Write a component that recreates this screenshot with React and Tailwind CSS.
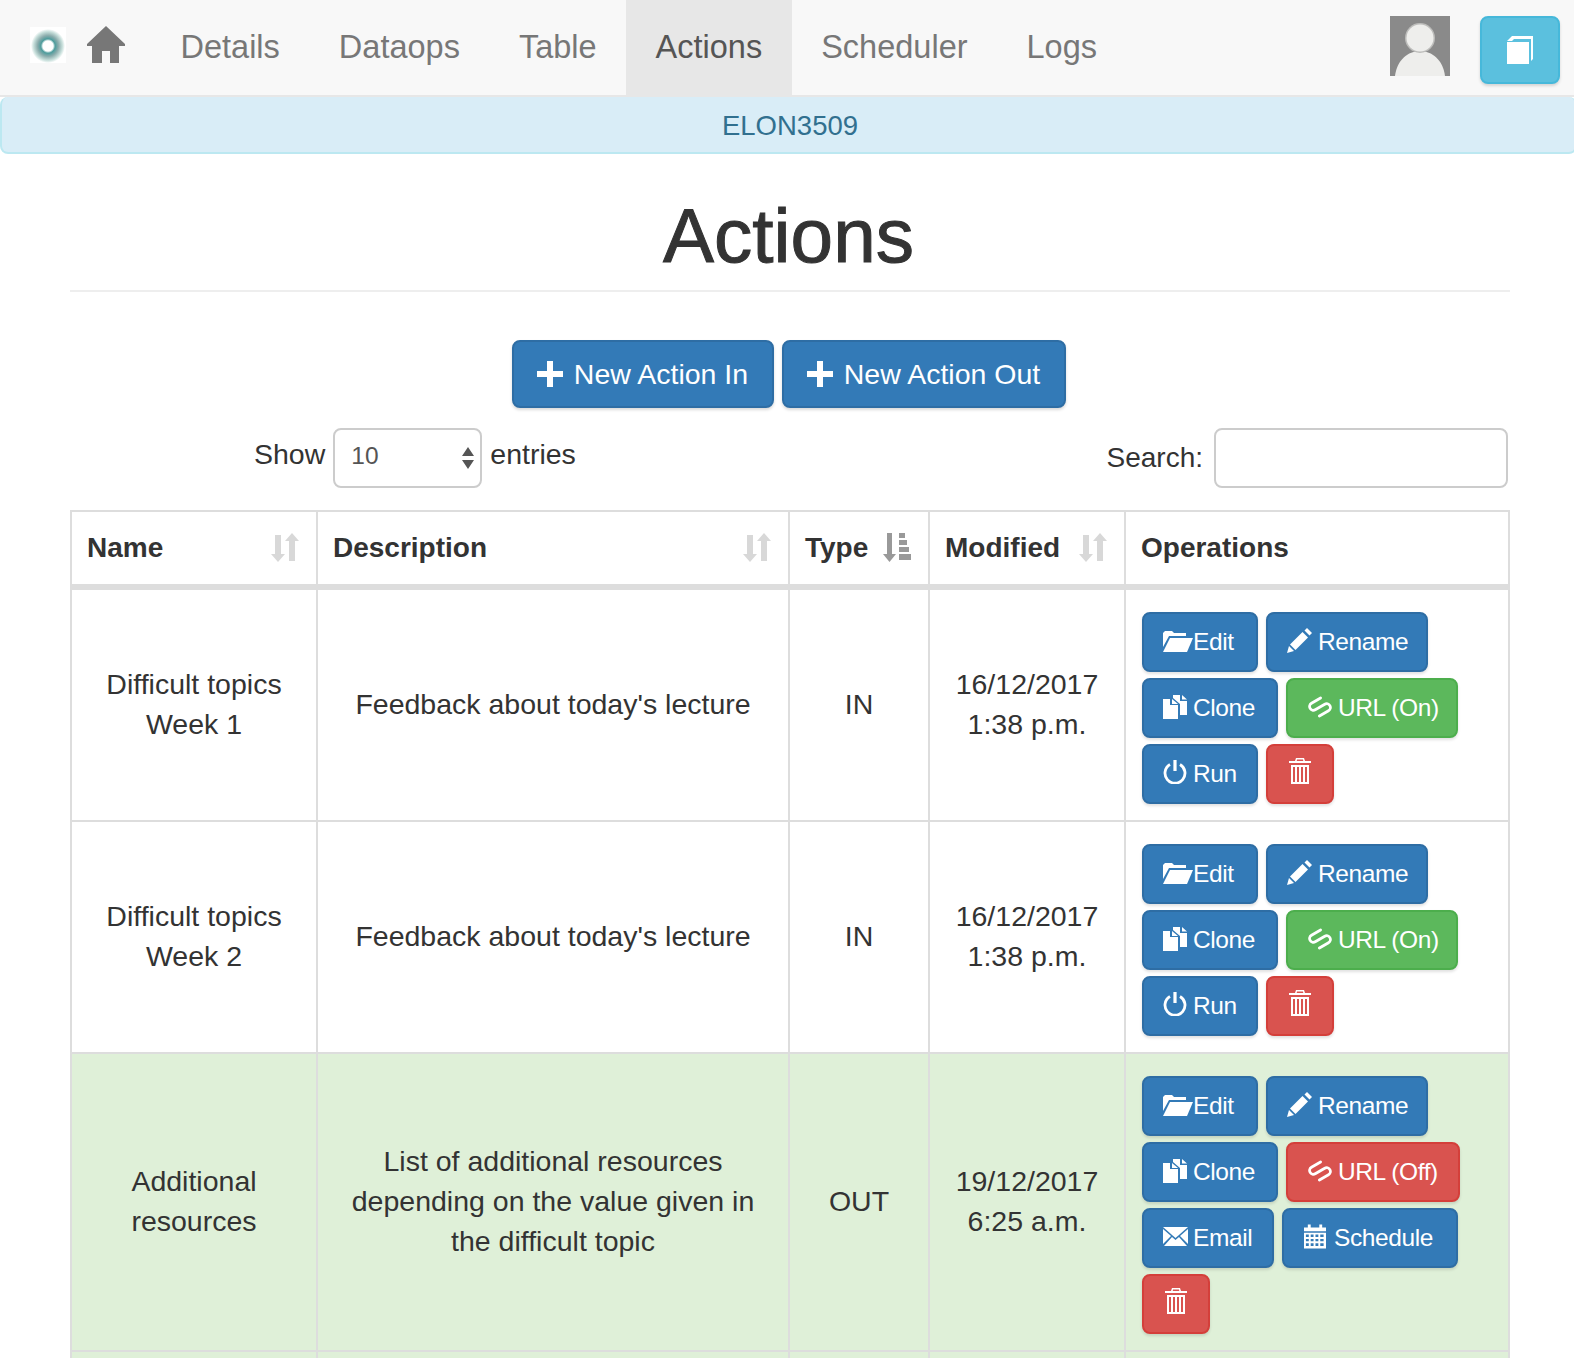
import React from "react";

const HomeIcon = () => (
  <svg className="w-[38px] h-[37px]" viewBox="0 0 38 37" fill="#777">
    <path d="M19 0 L38 18 V20 H32 V37 H23 V25 H15 V37 H5 V20 H0 V18 Z" />
  </svg>
);

const Logo = () => (
  <svg className="w-[36px] h-[36px]" viewBox="0 0 36 36">
    <defs>
      <radialGradient id="logoRing">
        <stop offset="0.3" stopColor="#ffffff" />
        <stop offset="0.42" stopColor="#4d9c9c" />
        <stop offset="0.62" stopColor="#8cadad" />
        <stop offset="0.85" stopColor="#c9e0dc" />
        <stop offset="1" stopColor="#ffffff" />
      </radialGradient>
    </defs>
    <rect width="36" height="36" fill="#fff" />
    <circle cx="18" cy="19" r="17" fill="url(#logoRing)" />
  </svg>
);

const Avatar = () => (
  <svg className="w-[60px] h-[60px]" viewBox="0 0 60 60">
    <rect width="60" height="60" fill="#8a8a8a" />
    <path d="M5 60 C7 44 18 35 30 35 C42 35 53 44 55 60 Z" fill="#eeeeec" />
    <circle cx="30" cy="22" r="15" fill="#bdbdbb" />
    <circle cx="30" cy="22" r="13.5" fill="#eeeeec" />
  </svg>
);

const BookIcon = () => (
  <svg className="w-[27px] h-[28px]" viewBox="0 0 27 28" fill="#fff">
    <path d="M0 5 L5 0 H26 V23 L24 25 V3 H7 L5 5 Z" />
    <path d="M0 6 H22 V28 H0 Z" />
  </svg>
);

const PlusIcon = () => (
  <svg className="w-[26px] h-[26px]" viewBox="0 0 26 26" fill="#fff">
    <path d="M10 0 H16 V10 H26 V16 H16 V26 H10 V16 H0 V10 H10 Z" />
  </svg>
);

const FolderIcon = () => (
  <svg className="w-[30px] h-[22px]" viewBox="0 0 30 22" fill="#fff">
    <path d="M0 17 V3 L2 1 H9 L11 3 H23 V6 H6 Z" />
    <path d="M7 8 H30 L24 22 H0 Z" />
  </svg>
);

const PencilIcon = () => (
  <svg className="w-[25px] h-[25px]" viewBox="0 0 25 25" fill="#fff">
    <path d="M0 25 L2 18 L7 23 Z" />
    <path d="M3 16.5 L15.5 4 L21 9.5 L8.5 22 Z" />
    <path d="M17.5 2.5 L20 0 L25 5 L22.5 7.5 Z" />
  </svg>
);

const CloneIcon = () => (
  <svg className="w-[24px] h-[24px]" viewBox="0 0 24 24" fill="#fff">
    <path d="M0 4 H7 V10 H15 V24 H0 Z" />
    <path d="M9 4 L15 9 H9 Z" />
    <path d="M10 0 H17 V6 H24 V20 H17 V9 L10 3 Z" />
    <path d="M19 0 L24 4.5 H19 Z" />
  </svg>
);

const LinkIcon = () => (
  <svg className="w-[24px] h-[24px]" viewBox="0 0 24 24" fill="none" stroke="#fff" strokeWidth="2.8" strokeLinecap="round">
    <g transform="translate(12 12) rotate(-30)">
      <path d="M-5 7.5 H5.5 A3.75 3.75 0 0 0 5.5 0 H-5.5 A3.75 3.75 0 0 1 -5.5 -7.5 H5" />
    </g>
  </svg>
);

const PowerIcon = () => (
  <svg className="w-[24px] h-[24px] mb-[2px]" viewBox="0 0 24 24" fill="none" stroke="#fff" strokeWidth="2.8">
    <path d="M7 4.5 A10 10 0 1 0 17 4.5" />
    <path d="M12 0 V11" strokeWidth="3.2" />
  </svg>
);

const TrashIcon = () => (
  <svg className="w-[22px] h-[26px] mb-[3px]" viewBox="0 0 22 26" fill="#fff">
    <path fillRule="evenodd" d="M7 0 H15 L16 3 H22 V5 H0 V3 H6 Z M8 1.5 L7.7 3 H14.3 L14 1.5 Z" />
    <path fillRule="evenodd" d="M2 7 H20 V26 H2 Z M4 9 V24 H6 V9 Z M8 9 V24 H10 V9 Z M12 9 V24 H14 V9 Z M16 9 V24 H18 V9 Z" />
  </svg>
);

const MailIcon = () => (
  <svg className="w-[25px] h-[20px]" viewBox="0 0 25 20" fill="#fff">
    <path d="M0 0 H25 L12.5 11 Z" />
    <path d="M0 2 L8 9 L0 17 Z" />
    <path d="M25 2 L17 9 L25 17 Z" />
    <path d="M9 10 L12.5 13 L16 10 L24 19 H1 Z" />
  </svg>
);

const CalendarIcon = () => (
  <svg className="w-[22px] h-[25px]" viewBox="0 0 23 25" fill="#fff">
    <path d="M4 0 H7 V3 H16 V0 H19 V3 H23 V7 H0 V3 H4 Z" />
    <path
      fillRule="evenodd"
      d="M0 8.5 H23 V25 H0 Z M2 10.5 V13 H5 V10.5 Z M7 10.5 V13 H10 V10.5 Z M12 10.5 V13 H15 V10.5 Z M17 10.5 V13 H20.5 V10.5 Z M2 15 V17.5 H5 V15 Z M7 15 V17.5 H10 V15 Z M12 15 V17.5 H15 V15 Z M17 15 V17.5 H20.5 V15 Z M2 19.5 V22.5 H5 V19.5 Z M7 19.5 V22.5 H10 V19.5 Z M12 19.5 V22.5 H15 V19.5 Z M17 19.5 V22.5 H20.5 V19.5 Z"
    />
  </svg>
);

const SortIcon = () => (
  <svg className="w-[28px] h-[30px]" viewBox="0 0 28 30" fill="#d8d8d8">
    <path d="M4 2 H10 V21 H14 L7 29 L0 21 H4 Z" />
    <path d="M21 0 L28 8 H24 V28 H18 V8 H14 Z" />
  </svg>
);

const SortActiveIcon = () => (
  <svg className="w-[28px] h-[30px]" viewBox="0 0 28 30" fill="#999">
    <path d="M4 0 H9 V21 H13 L6.5 29 L0 21 H4 Z" />
    <path d="M16 0 H22 V5 H16 Z M16 7 H24 V12 H16 Z M16 14 H26 V19 H16 Z M16 21 H28 V27 H16 Z" />
  </svg>
);

const navItems = ["Details", "Dataops", "Table", "Actions", "Scheduler", "Logs"];

const BLUE = "bg-[#337ab7] border-[#2e6da4]";
const GREEN = "bg-[#5cb85c] border-[#4cae4c]";
const RED = "bg-[#d9534f] border-[#d43f3a]";

const rows = [
  {
    name: ["Difficult topics", "Week 1"],
    desc: ["Feedback about today's lecture"],
    type: "IN",
    date: ["16/12/2017", "1:38 p.m."],
    urlOn: true,
  },
  {
    name: ["Difficult topics", "Week 2"],
    desc: ["Feedback about today's lecture"],
    type: "IN",
    date: ["16/12/2017", "1:38 p.m."],
    urlOn: true,
  },
  {
    name: ["Additional", "resources"],
    desc: ["List of additional resources", "depending on the value given in", "the difficult topic"],
    type: "OUT",
    date: ["19/12/2017", "6:25 a.m."],
    urlOn: false,
    green: true,
  },
];

// left aligned like the glyphicon + label of the original buttons
const OpButton = ({ color, icon, label, width, space = "pl-[19px] gap-[6px]" }) => (
  <button className={`${color} ${width} ${space} h-[60px] border-2 rounded-lg flex items-center justify-start text-white text-[24.5px] tracking-[-0.4px] shadow-[0_2px_3px_rgba(0,0,0,0.12)]`}>
    <span className="flex mb-[3px]">{icon}</span>
    {label && <span>{label}</span>}
  </button>
);

const Lines = ({ items }) => (
  <>
    {items.map((line) => (
      <div key={line}>{line}</div>
    ))}
  </>
);

const App = () => {
  return (
    <div className="h-[1358px] overflow-hidden bg-white text-[#333] text-[28.5px] leading-[40px] font-['Liberation_Sans',Arial,sans-serif]">
      {/* navbar */}
      <nav className="h-[97px] bg-[#f8f8f8] border-b-2 border-[#e7e7e7] flex items-start">
        <div className="flex items-center ml-[30px] mt-[26px] gap-[21px] mr-[26px]">
          <Logo />
          <HomeIcon />
        </div>
        <ul className="flex">
          {navItems.map((item) => (
            <li
              key={item}
              className={`h-[95px] px-[29.5px] flex items-center text-[32.5px] pb-[1px] ${item === "Actions" ? "bg-[#e7e7e7] text-[#555]" : "text-[#777]"}`}
            >
              {item}
            </li>
          ))}
        </ul>
        <div className="ml-auto flex items-start mt-[16px] mr-[14px] gap-[30px]">
          <Avatar />
          <button className="w-[80px] h-[68px] bg-[#5bc0de] border-2 border-[#46b8da] rounded-lg flex items-center justify-center shadow-[0_2px_3px_rgba(0,0,0,0.15)]">
            <BookIcon />
          </button>
        </div>
      </nav>

      {/* alert */}
      <div className="h-[57px] -mr-[3px] pl-[3px] bg-[#d9edf7] border-2 border-t-0 border-[#bce8f1] rounded-lg text-[#31708f] text-[27.5px] text-center leading-[57px]">
        ELON3509
      </div>

      <main className="pl-[70px] pr-[64px]">
        <h1 className="text-center text-[76.5px] leading-[80px] mt-[42px] pr-[3px] [-webkit-text-stroke:1px_#333]">Actions</h1>
        <hr className="mt-[14px] border-t-2 border-[#eee]" />

        <div className="flex justify-center gap-[8px] mt-[48px] pr-[3px]">
          <button className="h-[68px] w-[262px] bg-[#337ab7] border-2 border-[#2e6da4] rounded-lg text-white flex items-center justify-center gap-[11px] shadow-[0_2px_3px_rgba(0,0,0,0.15)]">
            <PlusIcon />
            New Action In
          </button>
          <button className="h-[68px] w-[284px] bg-[#337ab7] border-2 border-[#2e6da4] rounded-lg text-white flex items-center justify-center gap-[11px] shadow-[0_2px_3px_rgba(0,0,0,0.15)]">
            <PlusIcon />
            New Action Out
          </button>
        </div>

        {/* datatable controls */}
        <div className="flex mt-[20px] h-[60px] items-center">
          <label className="flex items-center gap-[8px] ml-[184px] -mt-[8px]">
            Show
            <div className="relative mt-[8px]">
              <select className="appearance-none w-[149px] h-[60px] border-2 border-[#ccc] rounded-lg pl-[16px] pb-[4px] text-[24.5px] text-[#555] bg-white">
                <option>10</option>
              </select>
              <svg className="absolute right-[8px] top-[19px] w-[12px] h-[22px]" viewBox="0 0 12 22" fill="#555">
                <path d="M6 0 L12 9 H0 Z M0 13 H12 L6 22 Z" />
              </svg>
            </div>
            entries
          </label>
          <label className="ml-auto flex items-center gap-[11px] mr-[2px]">
            <span className="text-[28px]">Search:</span>
            <input className="w-[294px] h-[60px] border-2 border-[#ccc] rounded-lg bg-white" />
          </label>
        </div>

        <table className="mt-[22px] w-[1440px] table-fixed border-collapse">
          <colgroup>
            <col className="w-[246px]" />
            <col className="w-[472px]" />
            <col className="w-[140px]" />
            <col className="w-[196px]" />
            <col />
          </colgroup>
          <thead>
            <tr className="h-[76px] font-bold text-[28px]">
              {["Name", "Description", "Type", "Modified"].map((head) => (
                <th key={head} className="border-2 border-b-[6px] border-[#ddd] pl-[15px] pr-[17px] text-left">
                  <div className="flex items-center justify-between">
                    {head}
                    {head === "Type" ? <SortActiveIcon /> : <SortIcon />}
                  </div>
                </th>
              ))}
              <th className="border-2 border-b-[6px] border-[#ddd] pl-[15px] text-left">Operations</th>
            </tr>
          </thead>
          <tbody>
            {rows.map((row) => (
              <tr key={row.name[1]} className={row.green ? "bg-[#dff0d8]" : ""}>
                <td className="border-2 border-[#ddd] text-center align-middle pb-[2px] px-[15px]">
                  <Lines items={row.name} />
                </td>
                <td className="border-2 border-[#ddd] text-center align-middle pb-[2px] px-[15px]">
                  <Lines items={row.desc} />
                </td>
                <td className="border-2 border-[#ddd] text-center align-middle pb-[2px]">{row.type}</td>
                <td className="border-2 border-[#ddd] text-center align-middle pb-[2px]">
                  <Lines items={row.date} />
                </td>
                <td className="border-2 border-[#ddd] pl-[16px] pr-[15px] pt-[22px] pb-[16px] align-top">
                  <div className="flex flex-wrap gap-x-[8px] gap-y-[6px]">
                    <OpButton color={BLUE} width="w-[116px]" icon={<FolderIcon />} label="Edit" space="pl-[19px] gap-[0px]" />
                    <OpButton color={BLUE} width="w-[162px]" icon={<PencilIcon />} label="Rename" />
                    <OpButton color={BLUE} width="w-[136px]" icon={<CloneIcon />} label="Clone" />
                    {row.urlOn ? (
                      <OpButton color={GREEN} width="w-[172px]" icon={<LinkIcon />} label="URL (On)" space="pl-[20px] gap-[6px]" />
                    ) : (
                      <OpButton color={RED} width="w-[174px]" icon={<LinkIcon />} label="URL (Off)" space="pl-[20px] gap-[6px]" />
                    )}
                    {row.type === "IN" ? (
                      <OpButton color={BLUE} width="w-[116px]" icon={<PowerIcon />} label="Run" />
                    ) : (
                      <>
                        <OpButton color={BLUE} width="w-[132px]" icon={<MailIcon />} label="Email" space="pl-[19px] gap-[5px]" />
                        <OpButton color={BLUE} width="w-[176px]" icon={<CalendarIcon />} label="Schedule" space="pl-[20px] gap-[8px]" />
                      </>
                    )}
                    <OpButton color={RED} width="w-[68px]" icon={<TrashIcon />} space="pl-[21px]" />
                  </div>
                </td>
              </tr>
            ))}
            <tr className="h-[100px] bg-[#dff0d8]">
              <td className="border-2 border-[#ddd]" />
              <td className="border-2 border-[#ddd]" />
              <td className="border-2 border-[#ddd]" />
              <td className="border-2 border-[#ddd]" />
              <td className="border-2 border-[#ddd]" />
            </tr>
          </tbody>
        </table>
      </main>
    </div>
  );
};

export default App;
